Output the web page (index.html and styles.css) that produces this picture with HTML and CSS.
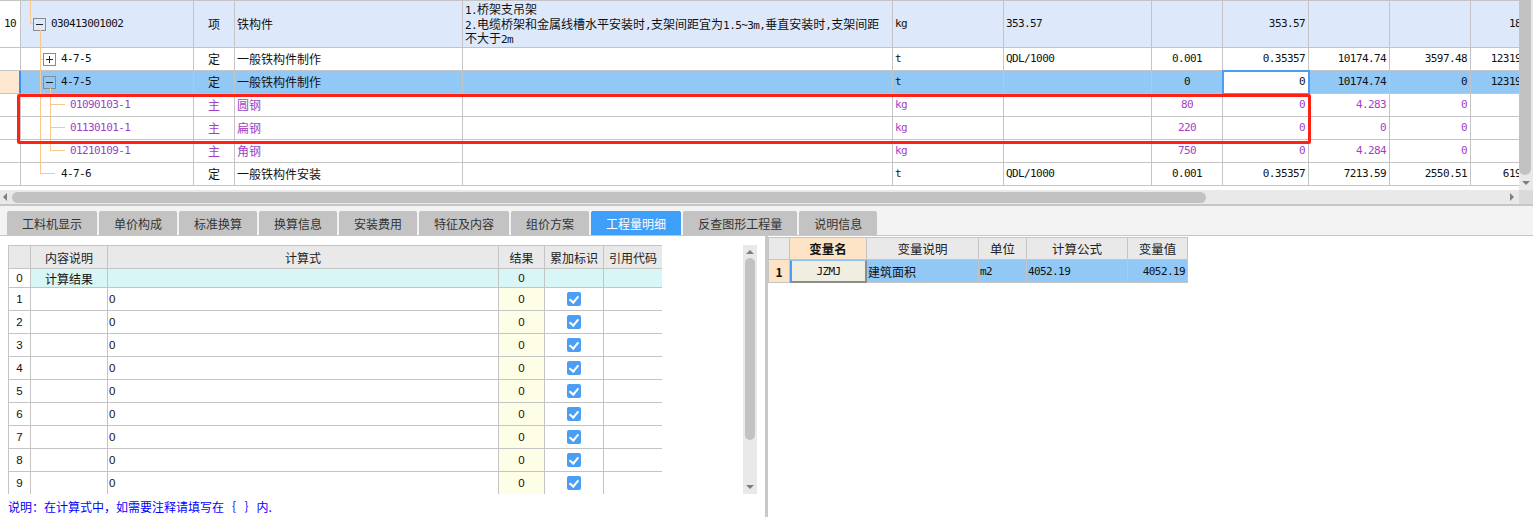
FILE: index.html
```html
<!DOCTYPE html>
<html lang="zh">
<head>
<meta charset="utf-8">
<title>工程量明细</title>
<link rel="stylesheet" href="styles.css">
</head>
<body>
<div class="app">
  <section class="top">
    <div class="grid">
      <div class="rows">
        <div class="row tall r-item">
          <div class="c num m">10</div>
          <div class="c tree l1"><span class="tbox"></span><span class="m">030413001002</span></div>
          <div class="c ctr">项</div>
          <div class="c">铁构件</div>
          <div class="c desc"><span class="m">1.</span>桥架支吊架<br><span class="m">2.</span>电缆桥架和金属线槽水平安装时<span class="m">,</span>支架间距宜为<span class="m">1.5~3m,</span>垂直安装时<span class="m">,</span>支架间距<br>不大于<span class="m">2m</span></div>
          <div class="c m">kg</div>
          <div class="c m">353.57</div>
          <div class="c"></div>
          <div class="c m rt">353.57</div>
          <div class="c"></div>
          <div class="c"></div>
          <div class="c m rt">18.57</div>
        </div>
        <div class="row">
          <div class="c num"></div>
          <div class="c tree l2"><span class="tbox plus"></span><span class="m">4-7-5</span></div>
          <div class="c ctr">定</div>
          <div class="c">一般铁构件制作</div>
          <div class="c"></div>
          <div class="c m">t</div>
          <div class="c m">QDL/1000</div>
          <div class="c m ctr">0.001</div>
          <div class="c m rt">0.35357</div>
          <div class="c m rt">10174.74</div>
          <div class="c m rt">3597.48</div>
          <div class="c m rt">12319.86</div>
        </div>
        <div class="row r-sel">
          <div class="c num"></div>
          <div class="c tree l2"><span class="tbox"></span><span class="m">4-7-5</span></div>
          <div class="c ctr">定</div>
          <div class="c">一般铁构件制作</div>
          <div class="c"></div>
          <div class="c m">t</div>
          <div class="c m"></div>
          <div class="c m ctr">0</div>
          <div class="c m rt cur">0</div>
          <div class="c m rt">10174.74</div>
          <div class="c m rt">0</div>
          <div class="c m rt">12319.86</div>
        </div>
        <div class="row r-mat">
          <div class="c num"></div>
          <div class="c tree l3"><span class="m">01090103-1</span></div>
          <div class="c ctr">主</div>
          <div class="c">圆钢</div>
          <div class="c"></div>
          <div class="c m">kg</div>
          <div class="c m"></div>
          <div class="c m ctr">80</div>
          <div class="c m rt">0</div>
          <div class="c m rt">4.283</div>
          <div class="c m rt">0</div>
          <div class="c m rt"></div>
        </div>
        <div class="row r-mat">
          <div class="c num"></div>
          <div class="c tree l3"><span class="m">01130101-1</span></div>
          <div class="c ctr">主</div>
          <div class="c">扁钢</div>
          <div class="c"></div>
          <div class="c m">kg</div>
          <div class="c m"></div>
          <div class="c m ctr">220</div>
          <div class="c m rt">0</div>
          <div class="c m rt">0</div>
          <div class="c m rt">0</div>
          <div class="c m rt"></div>
        </div>
        <div class="row r-mat">
          <div class="c num"></div>
          <div class="c tree l3"><span class="m">01210109-1</span></div>
          <div class="c ctr">主</div>
          <div class="c">角钢</div>
          <div class="c"></div>
          <div class="c m">kg</div>
          <div class="c m"></div>
          <div class="c m ctr">750</div>
          <div class="c m rt">0</div>
          <div class="c m rt">4.284</div>
          <div class="c m rt">0</div>
          <div class="c m rt"></div>
        </div>
        <div class="row">
          <div class="c num"></div>
          <div class="c tree l2n"><span class="m">4-7-6</span></div>
          <div class="c ctr">定</div>
          <div class="c">一般铁构件安装</div>
          <div class="c"></div>
          <div class="c m">t</div>
          <div class="c m">QDL/1000</div>
          <div class="c m ctr">0.001</div>
          <div class="c m rt">0.35357</div>
          <div class="c m rt">7213.59</div>
          <div class="c m rt">2550.51</div>
          <div class="c m rt">6193.4</div>
        </div>
      </div>
      <svg class="tree-lines" width="80" height="186" viewBox="0 0 80 186">
        <path d="M30.5 0V23.5H33M40.5 30V173.5H55M40.5 59.5H43M40.5 81.5H43M50.5 88V150.5H65M50.5 104.5H65M50.5 127.5H65" fill="none" stroke="#f9c88c" stroke-width="1" shape-rendering="crispEdges"/>
      </svg>
      <div class="mark"></div>
    </div>
    <div class="vscroll">
      <div class="vthumb"></div>
      <div class="arr-down"></div>
    </div>
  </section>

  <div class="hbar">
    <div class="hscroll">
      <span class="arr-left"></span>
      <span class="hthumb"></span>
      <span class="arr-right"></span>
    </div>
    <div class="corner"></div>
  </div>

  <nav class="tabstrip">
    <div class="tab">工料机显示</div>
    <div class="tab">单价构成</div>
    <div class="tab">标准换算</div>
    <div class="tab">换算信息</div>
    <div class="tab">安装费用</div>
    <div class="tab">特征及内容</div>
    <div class="tab">组价方案</div>
    <div class="tab active">工程量明细</div>
    <div class="tab">反查图形工程量</div>
    <div class="tab">说明信息</div>
  </nav>

  <section class="bottom">
    <div class="left">
      <div class="calc-area">
        <div class="calc">
          <div class="crow head">
            <div class="k"></div>
            <div class="k">内容说明</div>
            <div class="k">计算式</div>
            <div class="k">结果</div>
            <div class="k">累加标识</div>
            <div class="k">引用代码</div>
          </div>
          <div class="crow r0">
            <div class="k n">0</div>
            <div class="k">计算结果</div>
            <div class="k"></div>
            <div class="k n">0</div>
            <div class="k"></div>
            <div class="k"></div>
          </div>
          <div class="crow"><div class="k n">1</div><div class="k"></div><div class="k n f">0</div><div class="k n res">0</div><div class="k"><span class="chk"></span></div><div class="k"></div></div>
          <div class="crow"><div class="k n">2</div><div class="k"></div><div class="k n f">0</div><div class="k n res">0</div><div class="k"><span class="chk"></span></div><div class="k"></div></div>
          <div class="crow"><div class="k n">3</div><div class="k"></div><div class="k n f">0</div><div class="k n res">0</div><div class="k"><span class="chk"></span></div><div class="k"></div></div>
          <div class="crow"><div class="k n">4</div><div class="k"></div><div class="k n f">0</div><div class="k n res">0</div><div class="k"><span class="chk"></span></div><div class="k"></div></div>
          <div class="crow"><div class="k n">5</div><div class="k"></div><div class="k n f">0</div><div class="k n res">0</div><div class="k"><span class="chk"></span></div><div class="k"></div></div>
          <div class="crow"><div class="k n">6</div><div class="k"></div><div class="k n f">0</div><div class="k n res">0</div><div class="k"><span class="chk"></span></div><div class="k"></div></div>
          <div class="crow"><div class="k n">7</div><div class="k"></div><div class="k n f">0</div><div class="k n res">0</div><div class="k"><span class="chk"></span></div><div class="k"></div></div>
          <div class="crow"><div class="k n">8</div><div class="k"></div><div class="k n f">0</div><div class="k n res">0</div><div class="k"><span class="chk"></span></div><div class="k"></div></div>
          <div class="crow"><div class="k n">9</div><div class="k"></div><div class="k n f">0</div><div class="k n res">0</div><div class="k"><span class="chk"></span></div><div class="k"></div></div>
        </div>
        <div class="lscroll">
          <span class="arr-up"></span>
          <span class="lthumb"></span>
          <span class="arr-down2"></span>
        </div>
      </div>
      <p class="note">说明：在计算式中，如需要注释请填写在｛&ensp;&thinsp;｝内.</p>
    </div>
    <div class="split"></div>
    <div class="right">
      <div class="vars">
        <div class="vrow head">
          <div class="v"></div>
          <div class="v hot">变量名</div>
          <div class="v">变量说明</div>
          <div class="v">单位</div>
          <div class="v">计算公式</div>
          <div class="v">变量值</div>
        </div>
        <div class="vrow sel">
          <div class="v idx">1</div>
          <div class="v curv m">JZMJ</div>
          <div class="v lft">建筑面积</div>
          <div class="v lft m">m2</div>
          <div class="v lft m">4052.19</div>
          <div class="v rgt m">4052.19</div>
        </div>
      </div>
    </div>
  </section>
</div>
</body>
</html>
```

FILE: styles.css
```css
* { box-sizing: border-box; }
html, body { margin: 0; padding: 0; }
body {
  width: 1533px;
  height: 517px;
  overflow: hidden;
  background: #fff;
  font: 12px "Noto Sans CJK SC", sans-serif;
  color: #111;
}
.m {
  font-family: "DejaVu Sans Mono", "Noto Sans CJK SC", monospace;
  font-size: 11px;
  letter-spacing: -0.6px;
}

/* ---------- top grid ---------- */
.top { display: flex; height: 190px; }
.grid { position: relative; width: 1519px; height: 190px; overflow: hidden; }
.rows { border-top: 1px solid #c4c4c4; }
.row {
  display: grid;
  grid-template-columns: 21px 173px 41px 228px 430px 111px 148px 71px 86px 81px 81px 72px;
  height: 23px;
}
.row.tall { height: 47px; }
.c {
  border-right: 1px solid #c4c4c4;
  border-bottom: 1px solid #c4c4c4;
  display: flex;
  align-items: center;
  padding: 0 2px;
  white-space: nowrap;
  overflow: hidden;
  line-height: 14px;
}
.ctr { justify-content: center; }
.rt { justify-content: flex-end; padding-right: 3px; }
.num { justify-content: center; padding: 0; }
.desc { display: block; padding: 1px 2px 0 2px; line-height: 14.5px; }
.desc .m { line-height: 1; }

.r-item .c { background: #dde9fb; }
.r-item .c.num { background: #fff; }
.r-sel .c { background: #92c8f6; }
.r-sel .c.num { background: #fde8cf; border-right: 2px solid #3b8ff0; }
.r-sel .c.cur {
  background: #fff;
  outline: 2px solid #4a9ff5;
  outline-offset: -1px;
  position: relative;
  z-index: 1;
}
.r-mat .c { color: #a23fc6; }

.tree { padding-right: 0; }
.l1 { padding-left: 12px; }
.l2 { padding-left: 22px; }
.l2n { padding-left: 40px; }
.l3 { padding-left: 49px; }

.tbox {
  flex: none;
  position: relative;
  width: 13px;
  height: 13px;
  border: 1px solid #8b8b8b;
  margin-right: 5px;
}
.tbox::before {
  content: "";
  position: absolute;
  left: 2px; right: 2px; top: 5px;
  height: 1px;
  background: #222;
}
.tbox.plus::after {
  content: "";
  position: absolute;
  top: 2px; bottom: 2px; left: 5px;
  width: 1px;
  background: #222;
}

.tree-lines { position: absolute; left: 0; top: 0; pointer-events: none; }
.mark {
  position: absolute;
  left: 17px;
  top: 94px;
  width: 1294px;
  height: 50px;
  border: 3px solid #ff2115;
  border-radius: 2px;
  pointer-events: none;
  z-index: 2;
}

.vscroll {
  width: 14px;
  height: 190px;
  background: #e9e9e9;
  display: flex;
  flex-direction: column;
}
.vthumb { width: 12px; height: 175px; background: #c2c2c2; border-radius: 0 0 6px 6px; }
.arr-down {
  margin: 6px 0 0 3px;
  width: 0; height: 0;
  border-left: 4px solid transparent;
  border-right: 4px solid transparent;
  border-top: 4px solid #7d7d86;
}

/* ---------- horizontal scrollbar ---------- */
.hbar { display: flex; height: 14px; }
.hscroll {
  width: 1519px;
  background: #e9e9e9;
  display: flex;
  align-items: center;
  padding: 0 5px 0 3px;
}
.arr-left {
  width: 0; height: 0;
  border-top: 4px solid transparent;
  border-bottom: 4px solid transparent;
  border-right: 4px solid #7d7d86;
}
.hthumb {
  margin-left: 5px;
  width: 1194px;
  height: 11px;
  border-radius: 6px;
  background: #c2c2c2;
}
.arr-right {
  margin-left: auto;
  width: 0; height: 0;
  border-top: 4px solid transparent;
  border-bottom: 4px solid transparent;
  border-left: 4px solid #7d7d86;
}
.corner { width: 14px; background: #dadada; }

/* ---------- tabs ---------- */
.tabstrip {
  height: 32px;
  border-top: 2px solid #c6c6c6;
  border-bottom: 1px solid #c6c6c6;
  background: #f3f3f3;
  display: flex;
  align-items: flex-end;
  gap: 2px;
  padding-left: 7px;
}
.tab {
  height: 24px;
  padding: 0 15px;
  background: #c3c3c3;
  border-radius: 2px 2px 0 0;
  display: flex;
  align-items: center;
  color: #333;
  font-size: 12px;
  white-space: nowrap;
}
.tab.active { background: #3f9ef7; color: #fff; }

/* ---------- bottom ---------- */
.bottom { display: flex; height: 281px; }
.left { width: 765px; padding: 9px 0 0 8px; }
.split { width: 3px; background: #c8c8c8; }
.right { flex: 1; padding-top: 1px; }

.calc-area { display: flex; height: 249px; }
.calc {
  width: 654px;
  height: 249px;
  overflow: hidden;
  border-top: 1px solid #c4c4c4;
  border-left: 1px solid #c4c4c4;
}
.crow {
  display: grid;
  grid-template-columns: 22px 77px 391px 46px 59px 59px;
  height: 23px;
}
.crow.r0 { height: 19px; }
.k {
  border-right: 1px solid #c4c4c4;
  border-bottom: 1px solid #c4c4c4;
  display: flex;
  align-items: center;
  justify-content: center;
  white-space: nowrap;
  overflow: hidden;
  color: #111;
}
.crow.head .k { background: #e9e9e9; color: #222; }
.crow.r0 .k { background: #d8f6f6; }
.crow.r0 .k:first-child { background: #fff; }
.n { font: 11.5px "Liberation Sans", sans-serif; }
.k.f { justify-content: flex-start; padding-left: 1px; }
.k.res { background: #fefee6; }
.chk {
  width: 14px;
  height: 14px;
  border-radius: 2px;
  background: #4a9ff5;
  position: relative;
}
.chk::after {
  content: "";
  position: absolute;
  left: 4px;
  top: 2px;
  width: 4px;
  height: 7px;
  border-right: 2px solid #fff;
  border-bottom: 2px solid #fff;
  transform: rotate(40deg);
}

.lscroll {
  margin-left: 81px;
  width: 14px;
  height: 249px;
  background: #e9e9e9;
  display: flex;
  flex-direction: column;
  align-items: center;
}
.arr-up {
  margin-top: 5px;
  width: 0; height: 0;
  border-left: 4px solid transparent;
  border-right: 4px solid transparent;
  border-bottom: 4px solid #7d7d86;
}
.lthumb {
  margin-top: 4px;
  width: 10px;
  height: 182px;
  border-radius: 5px;
  background: #c2c2c2;
}
.arr-down2 {
  margin-top: auto;
  margin-bottom: 5px;
  width: 0; height: 0;
  border-left: 4px solid transparent;
  border-right: 4px solid transparent;
  border-top: 4px solid #7d7d86;
}
.note {
  margin: 5px 0 0 0;
  line-height: 16px;
  color: #0000ff;
  white-space: nowrap;
}

/* ---------- variables table ---------- */
.vars {
  width: 420px;
  border-top: 1px solid #c4c4c4;
  border-left: 1px solid #c4c4c4;
}
.vrow {
  display: grid;
  grid-template-columns: 21px 77px 112px 48px 101px 60px;
  height: 23px;
}
.vrow.head { height: 22px; }
.v {
  border-right: 1px solid #c4c4c4;
  border-bottom: 1px solid #c4c4c4;
  display: flex;
  align-items: center;
  justify-content: center;
  white-space: nowrap;
  overflow: hidden;
}
.vrow.head .v { background: #e9e9e9; color: #222; font-size: 12.5px; }
.vrow.head .v.hot { background: #fde4c6; font-weight: bold; color: #111; }
.vrow.sel .v { background: #92c8f6; }
.vrow.sel .v.idx { background: #fde4c6; font-weight: bold; }
.vrow.sel .v.curv {
  background: #efeee1;
  border-left: 2px solid #4a9ff5;
  border-top: 1px solid #8fc2f0;
  border-right: 2px solid #8d8d8d;
  border-bottom: 2px solid #8d8d8d;
}
.v.lft { justify-content: flex-start; padding-left: 1px; }
.v.rgt { justify-content: flex-end; padding-right: 2px; }
```
